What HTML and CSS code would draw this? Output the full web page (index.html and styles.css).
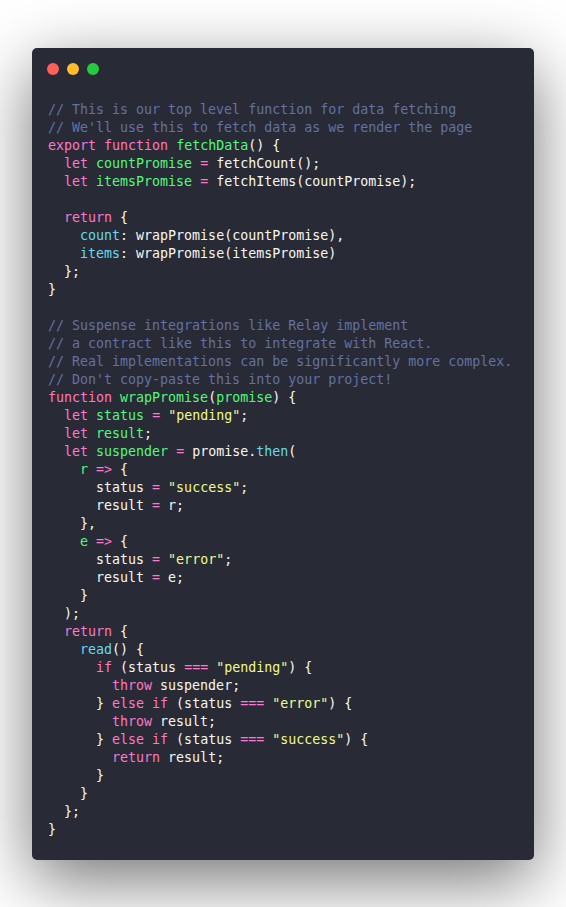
FILE: index.html
```html
<!DOCTYPE html>
<html>
<head>
<meta charset="utf-8">
<link rel="stylesheet" href="styles.css">
</head>
<body>
<div class="frame">
  <div class="window">
    <div class="dots">
      <span class="dot red"></span>
      <span class="dot yellow"></span>
      <span class="dot green"></span>
    </div>
<pre class="code"><span class="c">// This is our top level function for data fetching</span>
<span class="c">// We'll use this to fetch data as we render the page</span>
<span class="k">export</span> <span class="k">function</span> <span class="d">fetchData</span>() {
  <span class="k">let</span> <span class="d">countPromise</span> <span class="k">=</span> fetchCount();
  <span class="k">let</span> <span class="d">itemsPromise</span> <span class="k">=</span> fetchItems(countPromise);

  <span class="k">return</span> {
    <span class="p">count</span>: wrapPromise(countPromise),
    <span class="p">items</span>: wrapPromise(itemsPromise)
  };
}

<span class="c">// Suspense integrations like Relay implement</span>
<span class="c">// a contract like this to integrate with React.</span>
<span class="c">// Real implementations can be significantly more complex.</span>
<span class="c">// Don't copy-paste this into your project!</span>
<span class="k">function</span> <span class="d">wrapPromise</span>(<span class="d">promise</span>) {
  <span class="k">let</span> <span class="d">status</span> <span class="k">=</span> <span class="s">"pending"</span>;
  <span class="k">let</span> <span class="d">result</span>;
  <span class="k">let</span> <span class="d">suspender</span> <span class="k">=</span> promise.<span class="p">then</span>(
    <span class="d">r</span> <span class="k">=&gt;</span> {
      status <span class="k">=</span> <span class="s">"success"</span>;
      result <span class="k">=</span> r;
    },
    <span class="d">e</span> <span class="k">=&gt;</span> {
      status <span class="k">=</span> <span class="s">"error"</span>;
      result <span class="k">=</span> e;
    }
  );
  <span class="k">return</span> {
    <span class="p">read</span>() {
      <span class="k">if</span> (status <span class="k">===</span> <span class="s">"pending"</span>) {
        <span class="k">throw</span> suspender;
      } <span class="k">else</span> <span class="k">if</span> (status <span class="k">===</span> <span class="s">"error"</span>) {
        <span class="k">throw</span> result;
      } <span class="k">else</span> <span class="k">if</span> (status <span class="k">===</span> <span class="s">"success"</span>) {
        <span class="k">return</span> result;
      }
    }
  };
}</pre>
  </div>
</div>
</body>
</html>
```
FILE: styles.css
```css
html, body {
  margin: 0;
  padding: 0;
  background: #ffffff;
}

.frame {
  padding: 48px 32px 47px 32px;
}

.window {
  width: 502px;
  background: #282a36;
  border-radius: 5px;
  box-shadow: rgba(0, 0, 0, 0.55) 0px 20px 68px;
  box-sizing: border-box;
  padding: 15px 16px 21px 15px;
}

.dots {
  display: flex;
  gap: 8px;
  height: 12px;
}

.dot {
  width: 12px;
  height: 12px;
  border-radius: 50%;
  display: block;
}

.red { background: #ff5f56; }
.yellow { background: #ffbd2e; }
.green { background: #27c93f; }

.code {
  margin: 26px 0 0 1px;
  font-family: "DejaVu Sans Mono", monospace;
  font-size: 13.3px;
  line-height: 18px;
  color: #f8f8f2;
  white-space: pre;
}

.c { color: #6272a4; }
.k { color: #ff79c6; }
.d { color: #50fa7b; }
.s { color: #f1fa8c; }
.p { color: #66d9ef; }
```
